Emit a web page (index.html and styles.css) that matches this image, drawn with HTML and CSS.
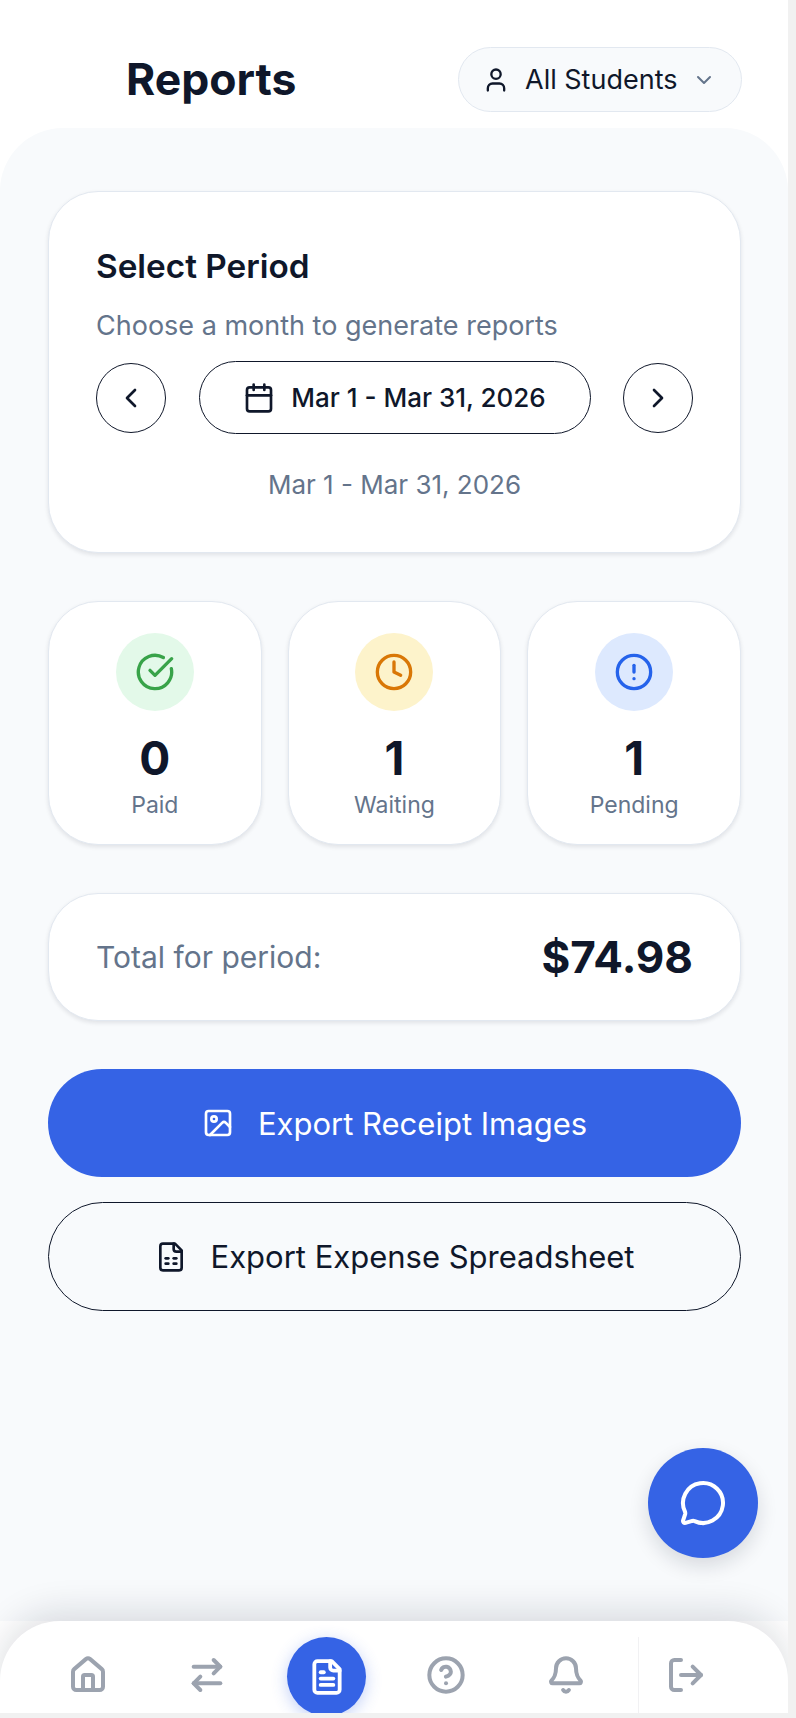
FILE: index.html
```html
<!DOCTYPE html>
<html lang="en">
<head>
    <meta charset="UTF-8">
    <meta name="viewport" content="width=device-width, initial-scale=1.0">
    <title>Reports</title>
    <link rel="stylesheet" href="styles.css">
</head>
<body>
    <div class="page">
        <header class="top">
            <h1>Reports</h1>
            <button class="student-pill">
                <svg class="icon icon-user" viewBox="0 0 24 24"><path d="M19 21v-2a4 4 0 0 0-4-4H9a4 4 0 0 0-4 4v2"/><circle cx="12" cy="7" r="4"/></svg>
                <span>All Students</span>
                <svg class="icon icon-chevron" viewBox="0 0 24 24"><path d="m6 9 6 6 6-6"/></svg>
            </button>
        </header>
        <div class="curve"></div>

        <main>
            <section class="card period">
                <h2>Select Period</h2>
                <p class="hint">Choose a month to generate reports</p>
                <div class="period-row">
                    <button class="round-btn"><svg class="icon icon-32" viewBox="0 0 24 24"><path d="m15 18-6-6 6-6"/></svg></button>
                    <button class="date-btn">
                        <svg class="icon icon-32" viewBox="0 0 24 24"><path d="M8 2v4"/><path d="M16 2v4"/><rect x="3" y="4" width="18" height="18" rx="2"/><path d="M3 10h18"/></svg>
                        <span>Mar 1 - Mar 31, 2026</span>
                    </button>
                    <button class="round-btn"><svg class="icon icon-32" viewBox="0 0 24 24"><path d="m9 18 6-6-6-6"/></svg></button>
                </div>
                <p class="range">Mar 1 - Mar 31, 2026</p>
            </section>

            <section class="stats">
                <div class="card stat">
                    <div class="stat-icon paid">
                        <svg class="icon icon-40" viewBox="0 0 24 24"><path d="M21.801 10A10 10 0 1 1 17 3.335"/><path d="m9 11 3 3L22 4"/></svg>
                    </div>
                    <div class="stat-num">0</div>
                    <div class="stat-label">Paid</div>
                </div>
                <div class="card stat">
                    <div class="stat-icon waiting">
                        <svg class="icon icon-40" viewBox="0 0 24 24"><circle cx="12" cy="12" r="10"/><path d="M12 6v6l4 2"/></svg>
                    </div>
                    <div class="stat-num">1</div>
                    <div class="stat-label">Waiting</div>
                </div>
                <div class="card stat">
                    <div class="stat-icon pending">
                        <svg class="icon icon-40" viewBox="0 0 24 24"><circle cx="12" cy="12" r="10"/><path d="M12 8v4"/><path d="M12 16h.01"/></svg>
                    </div>
                    <div class="stat-num">1</div>
                    <div class="stat-label">Pending</div>
                </div>
            </section>

            <section class="card total">
                <span class="total-label">Total for period:</span>
                <span class="total-value">$74.98</span>
            </section>

            <button class="export export-primary">
                <svg class="icon icon-32" viewBox="0 0 24 24"><rect x="3" y="3" width="18" height="18" rx="2"/><circle cx="9" cy="9" r="2"/><path d="m21 15-3.086-3.086a2 2 0 0 0-2.828 0L6 21"/></svg>
                <span>Export Receipt Images</span>
            </button>
            <button class="export export-outline">
                <svg class="icon icon-32" viewBox="0 0 24 24"><path d="M15 2H6a2 2 0 0 0-2 2v16a2 2 0 0 0 2 2h12a2 2 0 0 0 2-2V7Z"/><path d="M14 2v4a2 2 0 0 0 2 2h4"/><path d="M8 13h2"/><path d="M14 13h2"/><path d="M8 17h2"/><path d="M14 17h2"/></svg>
                <span>Export Expense Spreadsheet</span>
            </button>
        </main>

        <button class="chat-fab">
            <svg class="icon icon-48" viewBox="0 0 24 24"><path d="M2.992 16.342a2 2 0 0 1 .094 1.167l-1.065 3.29a1 1 0 0 0 1.236 1.168l3.413-.998a2 2 0 0 1 1.099.092 10 10 0 1 0-4.777-4.719"/></svg>
        </button>

        <nav class="bottom-nav">
            <a class="nav-item"><svg class="icon icon-40" viewBox="0 0 24 24"><path d="M15 21v-8a1 1 0 0 0-1-1h-4a1 1 0 0 0-1 1v8"/><path d="M3 10a2 2 0 0 1 .709-1.528l7-5.999a2 2 0 0 1 2.582 0l7 5.999A2 2 0 0 1 21 10v9a2 2 0 0 1-2 2H5a2 2 0 0 1-2-2z"/></svg></a>
            <a class="nav-item"><svg class="icon icon-40" viewBox="0 0 24 24"><path d="m16 3 4 4-4 4"/><path d="M20 7H4"/><path d="m8 21-4-4 4-4"/><path d="M4 17h16"/></svg></a>
            <a class="nav-item">
                <span class="nav-active"><svg class="icon icon-38" viewBox="0 0 24 24"><path d="M15 2H6a2 2 0 0 0-2 2v16a2 2 0 0 0 2 2h12a2 2 0 0 0 2-2V7Z"/><path d="M14 2v4a2 2 0 0 0 2 2h4"/><path d="M10 9H8"/><path d="M16 13H8"/><path d="M16 17H8"/></svg></span>
            </a>
            <a class="nav-item"><svg class="icon icon-40" viewBox="0 0 24 24"><circle cx="12" cy="12" r="10"/><path d="M9.09 9a3 3 0 0 1 5.83 1c0 2-3 3-3 3"/><path d="M12 17h.01"/></svg></a>
            <a class="nav-item"><svg class="icon icon-40" viewBox="0 0 24 24"><path d="M10.268 21a2 2 0 0 0 3.464 0"/><path d="M3.262 15.326A1 1 0 0 0 4 17h16a1 1 0 0 0 .74-1.673C19.41 13.956 18 12.499 18 8A6 6 0 0 0 6 8c0 4.499-1.411 5.956-2.738 7.326"/></svg></a>
            <a class="nav-exit"><svg class="icon icon-40" viewBox="0 0 24 24"><path d="m16 17 5-5-5-5"/><path d="M21 12H9"/><path d="M9 21H5a2 2 0 0 1-2-2V5a2 2 0 0 1 2-2h4"/></svg></a>
        </nav>
    </div>
</body>
</html>
```

FILE: styles.css
```css
* {
    box-sizing: border-box;
    margin: 0;
    padding: 0;
}

html, body {
    height: 1718px;
    overflow: hidden;
}

body {
    font-family: Inter, "Noto Sans", sans-serif;
    background-color: #f1f1f1;
    color: #0f172a;
}

button {
    font-family: inherit;
    color: inherit;
    background: none;
    border: none;
}

.page {
    position: relative;
    display: flex;
    flex-direction: column;
    width: 788px;
    height: 1713px;
    overflow: hidden;
    background-color: #fff;
}

.icon {
    display: block;
    flex-shrink: 0;
    fill: none;
    stroke: currentColor;
    stroke-width: 2;
    stroke-linecap: round;
    stroke-linejoin: round;
}

.icon-32 { width: 32px; height: 32px; }
.icon-38 { width: 38px; height: 38px; }
.icon-40 { width: 40px; height: 40px; }
.icon-48 { width: 48px; height: 48px; }

/* header */
.top {
    display: flex;
    justify-content: space-between;
    align-items: flex-start;
    height: 128px;
    padding: 47px 46px 0 126px;
}

.top h1 {
    font-size: 44.5px;
    font-weight: 700;
    line-height: 65px;
}

.student-pill {
    display: flex;
    align-items: center;
    width: 284px;
    height: 65px;
    padding-left: 23px;
    font-size: 27px;
    background-color: #f8fafc;
    border: 1px solid #e2e8f0;
    border-radius: 33px;
}

.icon-user {
    width: 28px;
    height: 28px;
    margin-right: 15px;
}

.icon-chevron {
    width: 24px;
    height: 24px;
    margin-left: 15px;
    color: #64748b;
}

.curve {
    height: 63px;
    background-color: #f8fafc;
    border-radius: 95px 95px 0 0;
}

main {
    flex: 1;
    padding: 0 47px 0 48px;
    background-color: #f8fafc;
}

.card {
    background-color: #fff;
    border: 1px solid #e2e8f0;
    border-radius: 50px;
    box-shadow: 0 2px 4px rgba(15, 23, 42, 0.1);
}

/* period card */
.period {
    padding: 51px 47px 49px;
}

.period h2 {
    font-size: 33.3px;
    font-weight: 600;
    line-height: 46px;
}

.hint {
    margin-top: 19px;
    font-size: 27px;
    line-height: 36px;
    color: #64748b;
}

.period-row {
    display: flex;
    justify-content: space-between;
    align-items: center;
    margin-top: 17px;
}

.round-btn {
    display: flex;
    justify-content: center;
    align-items: center;
    width: 70px;
    height: 70px;
    border: 1px solid #0f172a;
    border-radius: 50%;
}

.date-btn {
    display: flex;
    justify-content: center;
    align-items: center;
    gap: 16px;
    width: 392px;
    height: 73px;
    font-size: 26px;
    font-weight: 500;
    border: 1px solid #0f172a;
    border-radius: 37px;
}

.range {
    margin-top: 33px;
    font-size: 26px;
    line-height: 36px;
    text-align: center;
    color: #64748b;
}

/* stat cards */
.stats {
    display: grid;
    grid-template-columns: repeat(3, 1fr);
    gap: 26px;
    margin-top: 48px;
}

.stat {
    display: flex;
    flex-direction: column;
    align-items: center;
    height: 244px;
    padding-top: 31px;
}

.stat-icon {
    display: flex;
    justify-content: center;
    align-items: center;
    width: 78px;
    height: 78px;
    border-radius: 50%;
}

.paid { background-color: #e3f9e9; color: #38a349; }
.waiting { background-color: #fdf3cb; color: #d97706; }
.pending { background-color: #dde9fe; color: #2563eb; }

.stat-num {
    margin-top: 22px;
    font-size: 46px;
    font-weight: 700;
    line-height: 50px;
}

.stat-label {
    margin-top: 6px;
    font-size: 23px;
    line-height: 32px;
    color: #64748b;
}

/* total */
.total {
    display: flex;
    justify-content: space-between;
    align-items: center;
    height: 128px;
    margin-top: 48px;
    padding: 0 47px;
}

.total-label {
    font-size: 30px;
    color: #64748b;
}

.total-value {
    font-size: 44px;
    font-weight: 700;
}

/* export buttons */
.export {
    display: flex;
    justify-content: center;
    align-items: center;
    gap: 24px;
    width: 100%;
    font-size: 31px;
    font-weight: 400;
    border-radius: 55px;
}

.export-primary {
    height: 108px;
    margin-top: 48px;
    color: #fff;
    background-color: #3563e5;
}

.export-outline {
    height: 109px;
    margin-top: 25px;
    border: 1px solid #0f172a;
}

.chat-fab {
    position: absolute;
    right: 30px;
    bottom: 155px;
    z-index: 2;
    display: flex;
    justify-content: center;
    align-items: center;
    width: 110px;
    height: 110px;
    color: #fff;
    background-color: #3563e5;
    border-radius: 50%;
    box-shadow: 0 8px 20px rgba(15, 23, 42, 0.14);
}

/* bottom navigation */
.bottom-nav {
    position: relative;
    z-index: 1;
    display: flex;
    height: 92px;
    padding: 16px 0 0 28px;
    color: #9ca3af;
    background-color: #fff;
    border-radius: 60px 60px 0 0;
    box-shadow: 0 -8px 36px rgba(15, 23, 42, 0.14);
}

.bottom-nav .icon {
    stroke-width: 2.4;
}

.nav-item {
    display: flex;
    justify-content: center;
    align-items: center;
    width: 119.5px;
    height: 76px;
}

.nav-active {
    display: flex;
    justify-content: center;
    align-items: center;
    flex-shrink: 0;
    width: 79px;
    height: 79px;
    margin-top: 3px;
    color: #fff;
    background-color: #3563e5;
    border-radius: 50%;
    box-shadow: 0 4px 16px rgba(53, 99, 229, 0.3);
}

.nav-exit {
    display: flex;
    align-items: center;
    flex: 1;
    height: 76px;
    margin-left: 12px;
    padding-left: 27px;
    border-left: 1px solid #f1f1f3;
}
```
